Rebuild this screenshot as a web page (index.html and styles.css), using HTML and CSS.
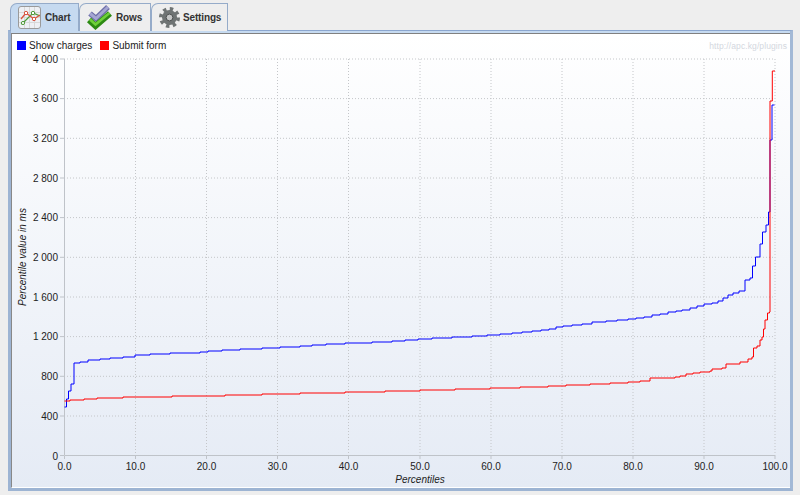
FILE: index.html
```html
<!DOCTYPE html>
<html lang="en">
<head>
  <meta charset="UTF-8">
  <title>Percentiles</title>
  <link rel="stylesheet" href="styles.css">
</head>
<body>
  <div class="tabs">
    <div class="tab tab-active">
      <span class="chart-icon">
        <svg width="21" height="21" viewBox="0 0 21 21">
          <path class="icon-grid" d="M5.5 0V21M10.5 0V21M15.5 0V21M0 5.5H21M0 10.5H21M0 15.5H21"/>
          <polyline class="icon-green" points="2,17 4,16 14,6 21,9"/>
          <polyline class="icon-red" points="2,12 7,6 15,12 21,8"/>
          <circle class="icon-green" cx="4" cy="16" r="1.6"/>
          <circle class="icon-green" cx="14" cy="6" r="1.7"/>
          <circle class="icon-red" cx="7" cy="6" r="1.7"/>
          <circle class="icon-red" cx="15" cy="12" r="1.7"/>
        </svg>
      </span>
      <span>Chart</span>
    </div>
    <div class="tab">
      <svg width="25" height="25" viewBox="0 0 25 25">
        <path d="M3 8.5L9 13.5L21 2" fill="none" stroke="#6d6ea8" stroke-width="5.5"/>
        <path d="M3 8.5L9 13.5L21 2" fill="none" stroke="#a5a6d2" stroke-width="3"/>
        <path d="M2 15L8.5 21L23 8.5" fill="none" stroke="#2c8a12" stroke-width="6"/>
        <path d="M3 14.5L8.5 19.5L22.5 8" fill="none" stroke="#6fd03a" stroke-width="2.5"/>
      </svg>
      <span>Rows</span>
    </div>
    <div class="tab">
      <svg width="21" height="21" viewBox="0 0 21 21">
        <circle class="gear" cx="10.5" cy="10.5" r="7.5"/>
        <circle class="gear-teeth" cx="10.5" cy="10.5" r="8.5"/>
        <circle class="gear-hub" cx="10.5" cy="10.5" r="3.4"/>
      </svg>
      <span>Settings</span>
    </div>
  </div>

  <div class="panel">
    <div class="panel-inner">
      <div class="legend">
        <span class="swatch swatch-blue"></span>
        <span class="legend-label">Show charges</span>
        <span class="swatch swatch-red"></span>
        <span>Submit form</span>
        <span class="watermark">http://apc.kg/plugins</span>
      </div>
      <svg class="plot" width="778" height="434" viewBox="12 52 778 434">
        <path class="grid" d="M64 59H775M64 98.6H775M64 138.3H775M64 178H775M64 217.6H775M64 257.3H775M64 297H775M64 336.6H775M64 376.3H775M64 416H775"/>
        <path class="grid" d="M135.5 59V455M206.5 59V455M277.5 59V455M348.5 59V455M420 59V455M491 59V455M562 59V455M633 59V455M704 59V455M775 59V455"/>
        <path class="axis" d="M64.5 59V455.5H775.5"/>
        <path class="axis" d="M60 59H64M60 98.6H64M60 138.3H64M60 178H64M60 217.6H64M60 257.3H64M60 297H64M60 336.6H64M60 376.3H64M60 416H64M60 455.5H64"/>
        <path class="axis" d="M64.5 456V459M135.5 456V459M206.5 456V459M277.5 456V459M348.5 456V459M420 456V459M491 456V459M562 456V459M633 456V459M704 456V459M775 456V459"/>

        <g class="y-labels">
          <text x="58" y="63">4 000</text>
          <text x="58" y="102">3 600</text>
          <text x="58" y="142">3 200</text>
          <text x="58" y="182">2 800</text>
          <text x="58" y="221">2 400</text>
          <text x="58" y="261">2 000</text>
          <text x="58" y="301">1 600</text>
          <text x="58" y="340">1 200</text>
          <text x="58" y="380">800</text>
          <text x="58" y="420">400</text>
          <text x="58" y="460">0</text>
        </g>
        <g class="x-labels">
          <text x="64.5" y="470">0.0</text>
          <text x="135.5" y="470">10.0</text>
          <text x="206.5" y="470">20.0</text>
          <text x="277.5" y="470">30.0</text>
          <text x="348.5" y="470">40.0</text>
          <text x="420" y="470">50.0</text>
          <text x="491" y="470">60.0</text>
          <text x="562" y="470">70.0</text>
          <text x="633" y="470">80.0</text>
          <text x="704" y="470">90.0</text>
          <text x="775" y="470">100.0</text>
        </g>
        <text class="axis-title" x="420" y="483">Percentiles</text>
        <text class="axis-title" transform="translate(26 257) rotate(-90)">Percentile value in ms</text>

        <path class="line-blue" d="M64.5 407H66.5V399H68.5V391H71V384H74V363H80V362H88V360H100V359H110V358H123V357H135V355H150V354H170V353H200V352H208V351H222V350H240V349H262V348H280V347H300V346H312V345H326V344H345V343H372V342H392V341H405V340H418V339H432V338H452V337H472V336H487V335H500V334H512V333H522V332H532V331H541V330H549V329H556V327H563V326H572V325H582V324H592V322H606V321H617V320H628V319H636V318H644V317H652V315H660V314H668V312H676V311H682V310H690V308H697V306H704V304H712V303H718V301H723V298H728V295H733V293H739V291H745V280H750V278H752.5V266H755.5V257H760V244H762.5V232H766V225H768.5V212H770V140H772V105H774.5"/>
        <path class="line-red" d="M64.5 401H70V400H84V399H97V398H123V397H172V396H225V395H262V394H300V393H345V392H385V391H420V390H455V389H490V388H520V387H548V386H566V385H590V384H610V383H628V382H640V381H650V378H675V377H680V376H686V374H693V373H700V372H710V371H712V369H722V368H726V364H740V362H748V359H752V357H753.5V348H757V346H760V340H762V337H763.5V329H765V320H767.5V313H769.5V312H770V101H772.3V71H775"/>
      </svg>
    </div>
  </div>
</body>
</html>
```

FILE: styles.css
```css
body {
  margin: 0;
  background: #eeeeee;
  font-family: "Liberation Sans", Arial, sans-serif;
  font-size: 10px;
  color: #222;
  overflow: hidden;
}

.tabs {
  display: flex;
  padding: 3px 0 0 10px;
  height: 27px;
}

.tab {
  display: flex;
  align-items: center;
  gap: 4px;
  box-sizing: border-box;
  height: 28px;
  padding: 0 0 0 7px;
  border: 1px solid #95abc9;
  border-bottom: none;
  border-top-left-radius: 7px;
  background: #eeeeee;
  font-weight: bold;
  letter-spacing: -0.15px;
  color: #333;
}

.tab svg {
  display: block;
  flex: none;
}

.tab-active {
  position: relative;
  z-index: 1;
  width: 69px;
  background: #c6daf0;
}

.tab:nth-child(2) {
  width: 72px;
}

.tab:nth-child(3) {
  width: 77px;
  gap: 3px;
}

.chart-icon {
  display: block;
  flex: none;
  width: 21px;
  height: 21px;
  border: 1px solid #9a9a9a;
  border-radius: 3px;
  background: #eef0f4;
}

.icon-grid {
  fill: none;
  stroke: #d8d8d8;
  stroke-width: 1;
}

polyline.icon-green {
  fill: none;
  stroke: #4f9a3a;
  stroke-width: 1.3;
}

polyline.icon-red {
  fill: none;
  stroke: #d9533f;
  stroke-width: 1.3;
}

circle.icon-green {
  fill: #fff;
  stroke: #4f9a3a;
}

circle.icon-red {
  fill: #fff;
  stroke: #d9533f;
}

.gear {
  fill: #6f7474;
}

.gear-teeth {
  fill: none;
  stroke: #6f7474;
  stroke-width: 4;
  stroke-dasharray: 3.3 3.38;
}

.gear-hub {
  fill: #c4c6c6;
  stroke: #4d5050;
  stroke-width: 1;
}

.panel {
  box-sizing: border-box;
  width: 785px;
  height: 461px;
  margin: 0 0 0 8px;
  border: 3px solid #9db4d3;
  border-top-width: 1px;
  border-top-color: #8ba6cf;
  border-right-color: #a3b9d6;
  background: #c6daf0;
  padding-top: 2px;
}

.panel-inner {
  height: 455px;
  border-top: 1px solid #808080;
  border-left: 1px solid #888;
  border-bottom: 1px solid #fff;
  background: linear-gradient(#ffffff, #e5ebf5);
  box-sizing: border-box;
}

.legend {
  display: flex;
  align-items: center;
  height: 18px;
  padding: 5px 3px 0 5px;
  box-sizing: border-box;
}

.swatch {
  width: 9px;
  height: 9px;
  margin-right: 3px;
}

.swatch-blue {
  background: #0000ff;
}

.swatch-red {
  background: #ff0000;
}

.legend-label {
  margin-right: 8px;
}

.watermark {
  margin-left: auto;
  font-size: 8.5px;
  letter-spacing: 0.1px;
  color: #d3d7de;
}

.plot {
  display: block;
  font-family: "Liberation Sans", Arial, sans-serif;
  font-size: 10px;
}

.grid {
  fill: none;
  stroke: #c4c6c9;
  stroke-width: 1;
  stroke-dasharray: 1 2;
}

.axis {
  fill: none;
  stroke: #bfc3c9;
  stroke-width: 1;
}

.y-labels text {
  text-anchor: end;
  fill: #222;
}

.x-labels text {
  text-anchor: middle;
  fill: #222;
}

.axis-title {
  text-anchor: middle;
  font-style: italic;
  fill: #222;
}

.line-blue {
  fill: none;
  stroke: #0000ff;
  stroke-width: 1;
}

.line-red {
  fill: none;
  stroke: #ff0000;
  stroke-width: 1;
}
```
